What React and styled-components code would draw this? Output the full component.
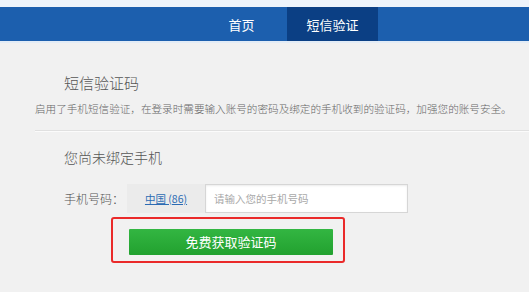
import React from 'react';
import styled, { createGlobalStyle } from 'styled-components';

const GlobalStyle = createGlobalStyle`
  html, body {
    margin: 0;
    padding: 0;
    background: #f1f1f1;
    font-family: "Noto Sans CJK SC", "Noto Sans", sans-serif;
  }
`

const Page = styled.div`
  width: 529px;
  height: 292px;
  overflow: hidden;
  background: #f1f1f1;
  border-top: 7px solid #eef4fb;
`

const Nav = styled.div`
  display: flex;
  height: 34px;
  padding-left: 196px;
  background: #1c5fae;
  border-bottom: 2px solid #e3ecf6;
`

const NavItem = styled.div`
  width: 91px;
  display: flex;
  align-items: center;
  justify-content: center;
  color: #fff;
  font-size: 13px;
  background: ${p => (p.active ? '#0b3f84' : 'transparent')};
`

const Main = styled.div`
  padding-left: 35px;
`

const Title = styled.div`
  margin: 30px 0 0 29px;
  font-size: 15px;
  font-weight: 300;
  line-height: 20px;
  color: #555;
`

const Desc = styled.div`
  margin-top: 8px;
  font-size: 10.6px;
  font-weight: 300;
  line-height: 16px;
  color: #666;
  white-space: nowrap;
`

const Divider = styled.div`
  margin-top: 13px;
  border-top: 1px solid #e0e0e0;
  border-bottom: 1px solid #fbfbfb;
`

const SubTitle = styled.div`
  margin: 15px 0 0 29px;
  font-size: 14px;
  font-weight: 300;
  line-height: 20px;
  color: #555;
`

const Row = styled.div`
  display: flex;
  align-items: stretch;
  height: 29px;
  margin: 17px 0 0 29px;
`

const Label = styled.div`
  width: 63px;
  display: flex;
  align-items: center;
  font-size: 12px;
  font-weight: 300;
  color: #555;
`

const Country = styled.a`
  width: 78px;
  display: flex;
  align-items: center;
  justify-content: center;
  background: #ebebeb;
  font-size: 10.5px;
  color: #2d6bb3;
  text-decoration: underline;
`

const PhoneInput = styled.input`
  width: 203px;
  box-sizing: border-box;
  border: 1px solid #d6d6d6;
  box-shadow: inset 0 1px 2px rgba(0, 0, 0, 0.08);
  padding: 0 8px;
  font-family: inherit;
  font-size: 10.5px;
  outline: none;
  &::placeholder {
    color: #a9a9a9;
  }
`

const Highlight = styled.div`
  width: 234px;
  height: 46px;
  box-sizing: border-box;
  margin: 4px 0 0 76px;
  padding: 9px 0 0 16px;
  border: 2px solid #ea2a2a;
  border-radius: 3px;
`

const SendButton = styled.button`
  width: 204px;
  height: 26px;
  border: none;
  border-radius: 1px;
  background: linear-gradient(#33b642, #22a12f);
  color: #fff;
  font-family: inherit;
  font-size: 13px;
  cursor: pointer;
`

export default function App() {
  return (
    <Page>
      <GlobalStyle />
      <Nav>
        <NavItem>首页</NavItem>
        <NavItem active>短信验证</NavItem>
      </Nav>
      <Main>
        <Title>短信验证码</Title>
        <Desc>启用了手机短信验证，在登录时需要输入账号的密码及绑定的手机收到的验证码，加强您的账号安全。</Desc>
        <Divider />
        <SubTitle>您尚未绑定手机</SubTitle>
        <Row>
          <Label>手机号码：</Label>
          <Country>中国 (86)</Country>
          <PhoneInput placeholder="请输入您的手机号码" />
        </Row>
        <Highlight>
          <SendButton>免费获取验证码</SendButton>
        </Highlight>
      </Main>
    </Page>
  );
}
